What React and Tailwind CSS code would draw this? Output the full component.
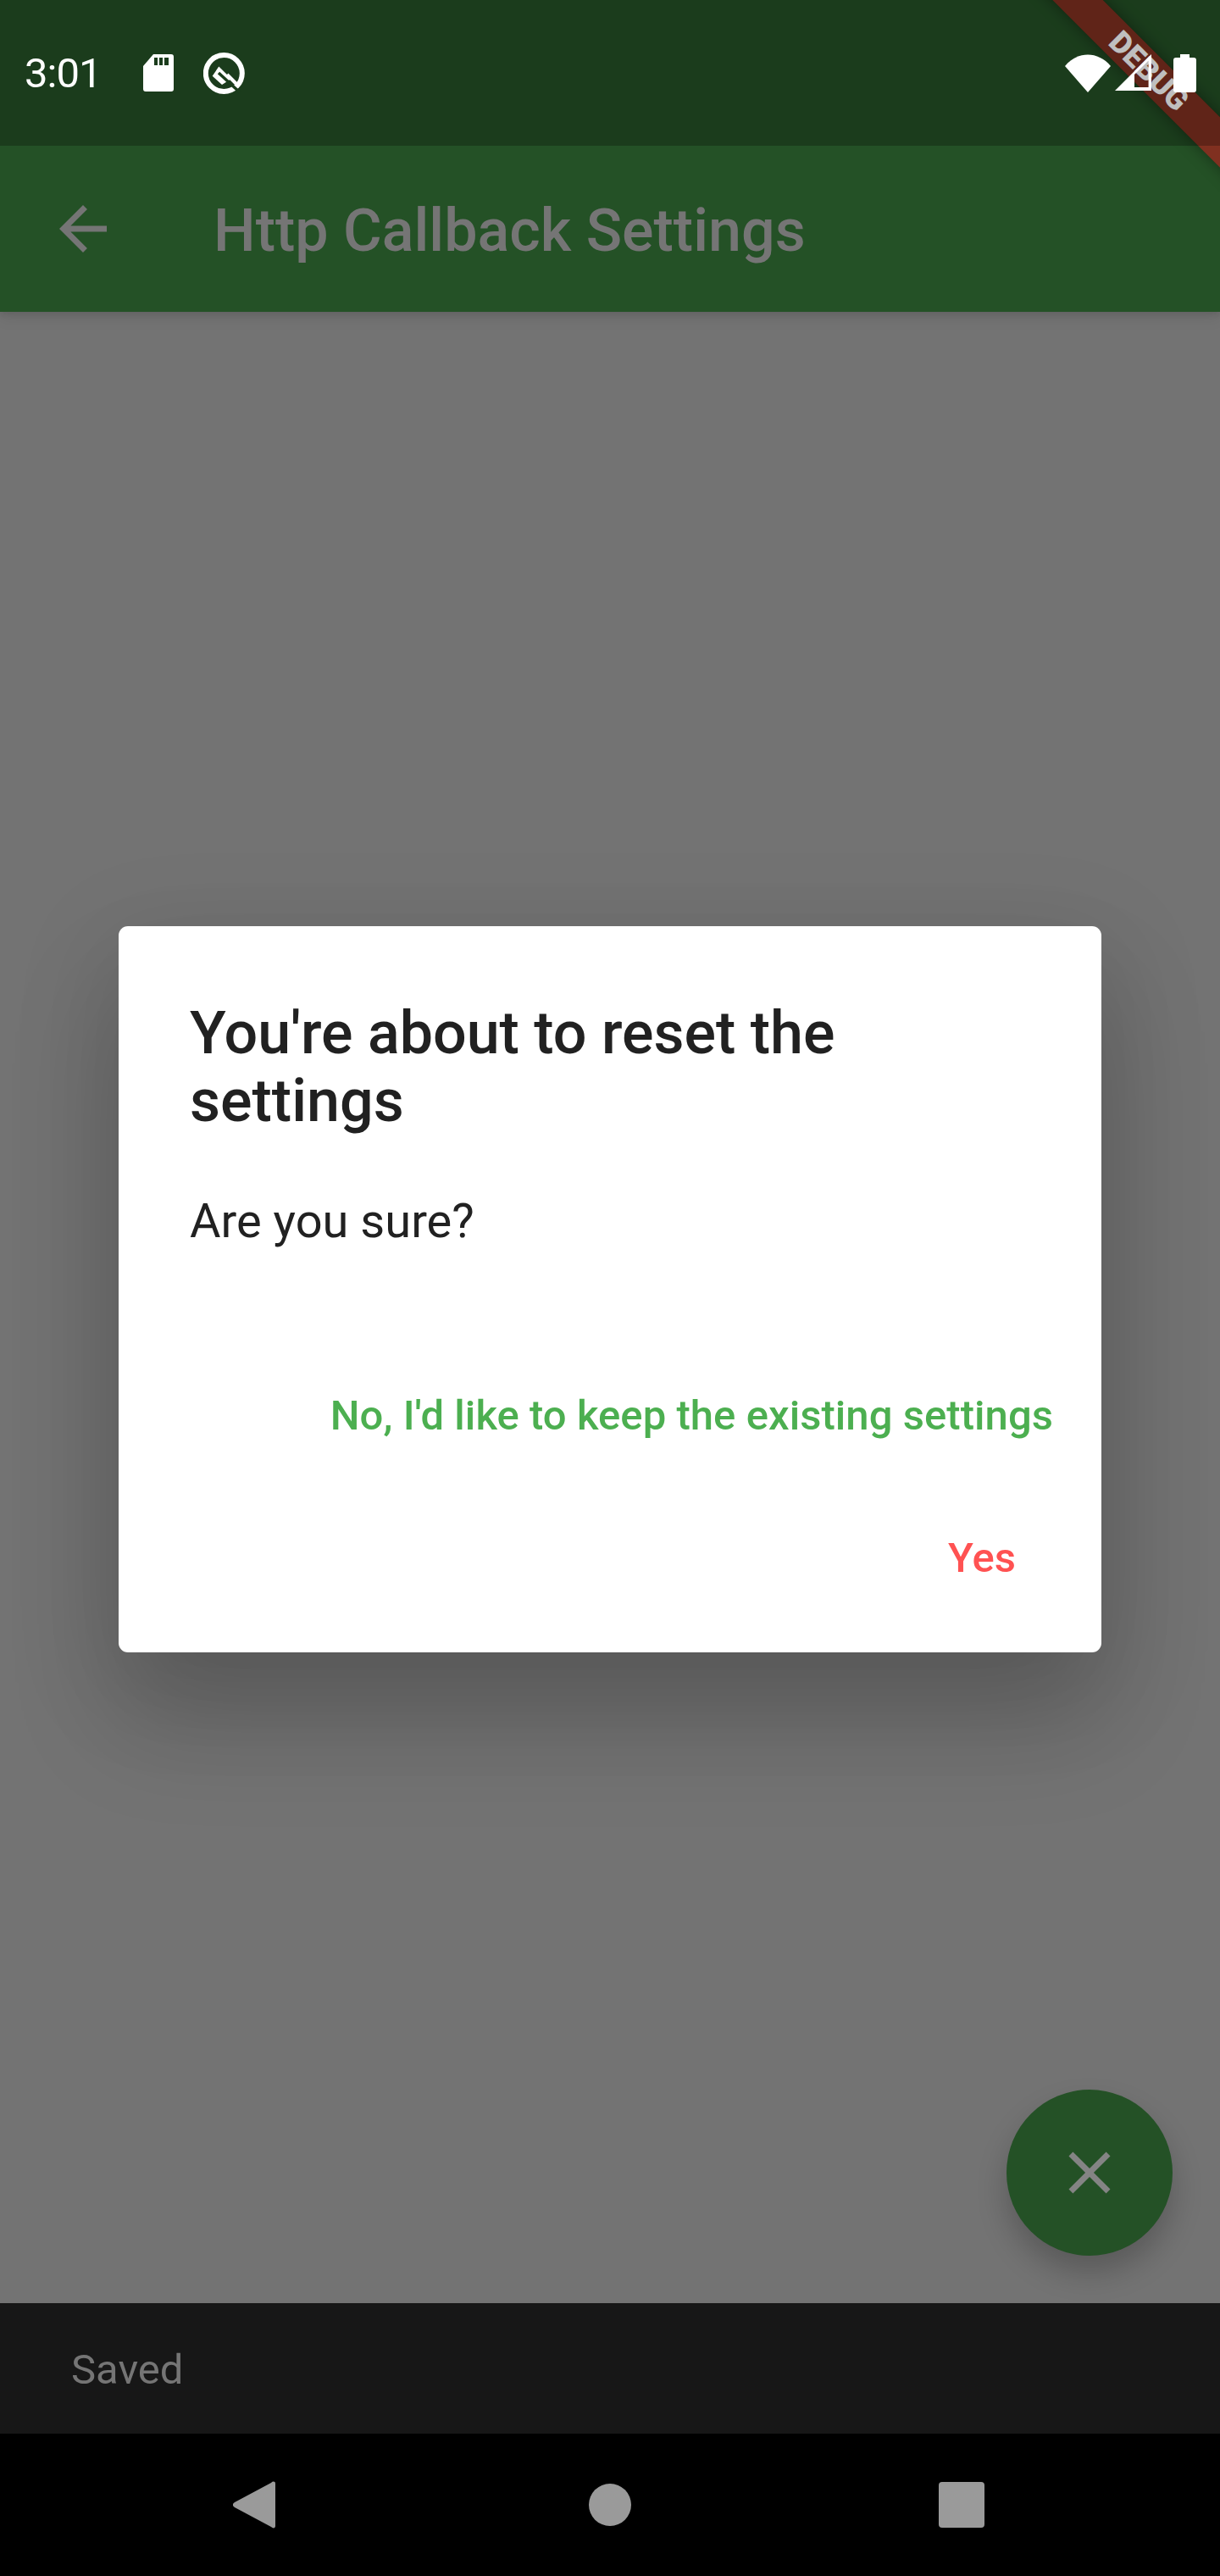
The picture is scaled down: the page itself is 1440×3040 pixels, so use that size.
import React from 'react';

function SdIcon() {
  return (
    <svg width="36" height="44" viewBox="0 0 36 44" className="ml-[50px] shrink-0">
      <path fillRule="evenodd" fill="#fff" d="M12 0H33a3 3 0 0 1 3 3V41a3 3 0 0 1-3 3H3a3 3 0 0 1-3-3V14ZM13 4V13H17V4ZM19 4V13H23V4ZM25 4V13H30V4Z" />
    </svg>
  );
}

function QIcon() {
  return (
    <svg width="49" height="49" viewBox="0 0 49 49" className="ml-[35px] shrink-0">
      <circle cx="24.3" cy="24.5" r="21.5" fill="none" stroke="#fff" strokeWidth="6" />
      <path fill="#fff" d="M18.3 16.5 33 31 22 38 10.7 27.7Z" />
      <path fill="none" stroke="#1b3d1c" strokeWidth="3.5" d="M18 24 43 47" />
      <path fill="none" stroke="#fff" strokeWidth="4" d="M28 26 40 38" />
    </svg>
  );
}

function StatusBar() {
  return (
    <div className="absolute top-0 left-0 right-0 z-40 h-[172px] bg-black/25 flex items-center pl-[29px] pr-[28px] text-white">
      <span className="mt-[2px] text-[49px] leading-[58px] tracking-[-1px] font-normal">3:01</span>
      <SdIcon />
      <QIcon />
      <div className="ml-auto flex items-center">
        <svg width="54" height="45" viewBox="0 0 54 45">
          <path fill="#fff" d="M0 14C15 -4 39 -4 54 14L27 45Z" />
        </svg>
        <svg width="44" height="44" viewBox="0 0 44 44" className="ml-[5px]">
          <path fillRule="evenodd" fill="#fff" d="M43 0V43H0ZM39.6 7.4 23 24V39H39.6Z" />
        </svg>
        <svg width="27" height="45" viewBox="0 0 27 45" className="ml-[25px]">
          <path fill="#fff" d="M8 0H19V4H24a3 3 0 0 1 3 3V42a3 3 0 0 1-3 3H3a3 3 0 0 1-3-3V7a3 3 0 0 1 3-3H8Z" />
        </svg>
      </div>
    </div>
  );
}

function AppBar() {
  return (
    <div className="relative z-10 h-[368px] pt-[172px] bg-[#245126] shadow-[0_7px_17px_rgba(0,0,0,0.08),0_4px_6px_rgba(0,0,0,0.08)] shrink-0">
      <div className="h-[196px] flex items-center">
        <svg width="84" height="84" viewBox="0 0 24 24" className="ml-[56px] shrink-0">
          <path fill="#757575" d="M20 11H7.83l5.59-5.59L12 4l-8 8 8 8 1.41-1.41L7.83 13H20v-2z" />
        </svg>
        <h1 className="ml-[112px] pt-[3px] text-[70px] leading-[82px] font-medium text-[#757575]">Http Callback Settings</h1>
      </div>
    </div>
  );
}

function ResetDialog() {
  return (
    <div className="absolute inset-0 z-20 flex items-center justify-center">
      <div className="mt-[3px] w-[1160px] h-[857px] bg-white rounded-[11px] shadow-[0_80px_130px_rgba(0,0,0,0.18),0_30px_120px_20px_rgba(0,0,0,0.08)] pt-[86px] flex flex-col">
        <h2 className="px-[84px] text-[70px] leading-[80px] font-medium text-[#212121]">
          You're about to reset the settings
        </h2>
        <p className="mt-[69px] px-[84px] text-[56px] leading-[66px] text-[#212121]">Are you sure?</p>
        <div className="mt-[113px] pr-[29px] flex flex-col items-end">
          <button className="h-[168px] min-w-[224px] px-[28px] text-[49px] tracking-[0.05px] font-medium text-[#4caf50]">
            No, I'd like to keep the existing settings
          </button>
          <button className="h-[168px] min-w-[224px] px-[28px] text-[49px] font-medium text-[#ff5252]">Yes</button>
        </div>
      </div>
    </div>
  );
}

function DebugBanner() {
  return (
    <div className="absolute top-0 right-0 w-[240px] h-[240px] overflow-hidden z-30 pointer-events-none">
      <div className="absolute top-[63px] left-[-44px] w-[400px] h-[42px] rotate-45 bg-[rgba(183,28,28,0.627)] shadow-[0_0_18px_rgba(0,0,0,0.4)] flex items-center justify-center">
        <span className="text-[36px] leading-[42px] font-black text-white">DEBUG</span>
      </div>
    </div>
  );
}

export default function App() {
  return (
    <div className="relative w-[1440px] h-[3040px] overflow-hidden bg-[#737373] flex flex-col font-['Roboto',sans-serif]">
      <AppBar />
      <div className="flex-1 relative">
        {/* fab */}
        <div className="absolute right-[56px] bottom-[56px] w-[196px] h-[196px] rounded-full bg-[#245126] flex items-center justify-center shadow-[0_20px_35px_rgba(0,0,0,0.22)]">
          <svg width="84" height="84" viewBox="0 0 24 24">
            <path fill="#848484" d="M19 6.41L17.59 5 12 10.59 6.41 5 5 6.41 10.59 12 5 17.59 6.41 19 12 13.41 17.59 19 19 17.59 13.41 12z" />
          </svg>
        </div>
      </div>
      {/* snackbar */}
      <div className="h-[154px] bg-[#171717] flex items-center px-[84px] shrink-0">
        <span className="pt-[3px] text-[49px] leading-[58px] text-[#757575]">Saved</span>
      </div>
      {/* nav bar */}
      <div className="h-[168px] bg-black flex items-center shrink-0">
        <svg width="50" height="56" viewBox="0 0 50 56" className="ml-[275px]">
          <path fill="#9a9a9a" d="M50 3V53C50 56 47 56 45 54L2 31C-1 29-1 27 2 25L45 2C47 0 50 0 50 3Z" />
        </svg>
        <div className="ml-[370px] w-[50px] h-[50px] rounded-full bg-[#9a9a9a]"></div>
        <div className="ml-[363px] w-[54px] h-[54px] rounded-[4px] bg-[#9a9a9a]"></div>
      </div>
      <ResetDialog />
      <DebugBanner />
      <StatusBar />
    </div>
  );
}
